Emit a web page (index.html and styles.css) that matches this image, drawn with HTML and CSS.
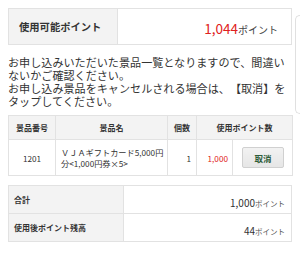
FILE: index.html
```html
<!DOCTYPE html>
<html lang="ja">
<head>
<meta charset="utf-8">
<link rel="stylesheet" href="styles.css">
</head>
<body>
<div class="page">
  <table class="avail">
    <tr>
      <th class="avail-label">使用可能ポイント</th>
      <td class="avail-value"><span class="num-red">1,044</span><span class="unit">ポイント</span></td>
    </tr>
  </table>
  <p class="note">お申し込みいただいた景品一覧となりますので、間違いないかご確認ください。<br>お申し込み景品をキャンセルされる場合は、【取消】をタップしてください。</p>
  <table class="items">
    <colgroup>
      <col class="w-no"><col class="w-name"><col class="w-qty"><col class="w-pt"><col class="w-btn">
    </colgroup>
    <thead>
      <tr>
        <th>景品番号</th>
        <th>景品名</th>
        <th>個数</th>
        <th colspan="2">使用ポイント数</th>
      </tr>
    </thead>
    <tbody>
      <tr>
        <td class="c-no">1201</td>
        <td class="c-name">ＶＪＡギフトカード5,000円分&lt;1,000円券×5&gt;</td>
        <td class="c-qty">1</td>
        <td class="c-pt">1,000</td>
        <td class="c-btn"><button class="cancel">取消</button></td>
      </tr>
    </tbody>
  </table>
  <table class="summary">
    <tr>
      <th>合計</th>
      <td><span class="sum-num">1,000</span><span class="sum-unit">ポイント</span></td>
    </tr>
    <tr>
      <th>使用後ポイント残高</th>
      <td><span class="sum-num">44</span><span class="sum-unit">ポイント</span></td>
    </tr>
  </table>
</div>
<div class="edge-panel"></div>
</body>
</html>
```
FILE: styles.css
```css
html, body {
  margin: 0;
  padding: 0;
  background: #fff;
}
body {
  font-family: "Noto Sans CJK JP", "Noto Sans", sans-serif;
  color: #333;
  overflow: hidden;
  text-spacing-trim: space-all;
}
.page {
  width: 284px;
  padding: 8px;
}
table {
  border-collapse: collapse;
  width: 100%;
}
.avail {
  height: 37px;
}
.avail th, .avail td {
  border: 1px solid #e2e2e2;
  padding: 0;
}
.avail-label {
  width: 98px;
  background: #f3f3f3;
  text-align: left;
  padding-left: 10px !important;
  font-size: 10.3px;
  font-weight: bold;
  color: #333;
}
.avail-value {
  text-align: right;
  padding-right: 13px !important;
  white-space: nowrap;
}
.num-red {
  color: #e02020;
  font-size: 13.5px;
}
.unit {
  font-size: 10px;
  color: #444;
}
.note {
  margin: 11px 0 7px;
  font-size: 11.1px;
  line-height: 13px;
  color: #333;
  text-spacing-trim: space-all;
}
.items {
  table-layout: fixed;
}
.w-no { width: 47px; }
.w-name { width: 112px; }
.w-qty { width: 29px; }
.w-pt { width: 36px; }
.w-btn { width: 60px; }
.items th, .items td {
  border: 1px solid #e2e2e2;
  padding: 0 4px;
}
.items th {
  background: #f3f3f3;
  height: 23px;
  font-weight: bold;
  text-align: center;
  font-size: 8px;
}
.items td {
  height: 35px;
  font-size: 8.2px;
}
.items td.c-no { text-align: center; }
.items td.c-name { text-align: left; line-height: 11px; padding: 0 3px 0 5px; }
.items td.c-qty { text-align: right; padding-right: 5px; }
.items td.c-pt { color: #e02020; text-align: right; padding-right: 4px; }
.items td.c-btn { text-align: center; padding: 0 3px 0 4px; }
.cancel {
  width: 42px;
  height: 21px;
  border: 1px solid #d0d0d0;
  border-radius: 2px;
  background: linear-gradient(#f2f2f2, #e6e6e6);
  color: #2f5d3a;
  font-family: "Noto Sans CJK JP", sans-serif;
  font-weight: bold;
  font-size: 8.5px;
  padding: 0;
}
.summary {
  margin-top: 9px;
}
.summary th, .summary td {
  border: 1px solid #e2e2e2;
  padding: 0 5px;
}
.summary th {
  width: 104px;
  background: #f3f3f3;
  text-align: left;
  font-size: 8px;
  font-weight: bold;
  height: 27px;
}
.summary td {
  text-align: right;
  padding-right: 6px;
}
.sum-num {
  font-size: 10px;
  color: #333;
}
.sum-unit {
  font-size: 7.5px;
  color: #555;
}
.edge-panel {
  position: absolute;
  left: 295px;
  top: 15px;
  width: 4px;
  height: 97px;
  border: 1px solid #e0e0e0;
  border-right: none;
  border-radius: 6px 0 0 6px;
}
```
